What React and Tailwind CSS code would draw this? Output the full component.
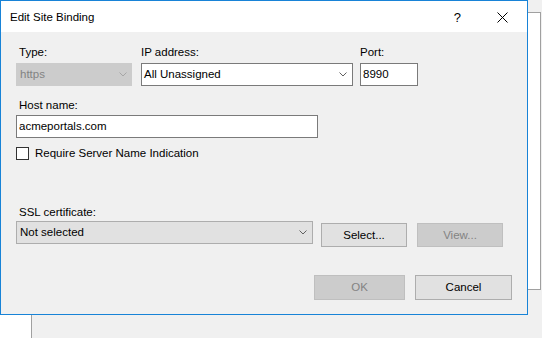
import React from "react";

const font = { fontFamily: '"Liberation Sans", Arial, sans-serif' };

function Chevron({ color = "#606060" }) {
  return (
    <svg width="8" height="5" viewBox="0 0 8 5" className="shrink-0">
      <path d="M0.5 0.5 L4 4 L7.5 0.5" fill="none" stroke={color} strokeWidth="1" />
    </svg>
  );
}

export default function App() {
  return (
    <div
      className="relative w-[542px] h-[338px] overflow-hidden bg-[#f0f0f0] text-[11.5px] leading-[15px] text-black"
      style={font}
    >
      {/* background window pieces */}
      <div className="absolute left-0 top-[290px] w-[32px] h-[48px] bg-white border-r border-[#a0a0a0]" />
      <div className="absolute left-[520px] top-[12px] w-[21px] h-[278px] bg-white border-t border-r border-b border-[#a0a0a0]" />

      {/* dialog */}
      <div className="absolute left-0 top-0 w-[528px] h-[315px] border border-[#1883d7] bg-[#f0f0f0] flex flex-col">
        <div className="h-[31px] bg-white flex items-center pt-[2px]">
          <span className="pl-[9px] flex-1">Edit Site Binding</span>
          <span className="text-[13px] mr-[36px] mb-[1px]">?</span>
          <svg width="11" height="11" viewBox="0 0 11 11" className="mr-[19px] mb-[1px]">
            <path d="M0.5 0.5 L10.5 10.5 M10.5 0.5 L0.5 10.5" stroke="#000" strokeWidth="1" />
          </svg>
        </div>

        <div className="flex-1 flex flex-col pl-[15px] pr-[15px] pt-[13px]">
          {/* row 1 */}
          <div className="flex">
            <div className="w-[116px] flex flex-col">
              <div className="h-[15px] pl-[3px]">Type:</div>
              <div className="mt-[3px] h-[23px] bg-[#cccccc] border border-[#cccccc] flex items-center pl-[3px] pr-[4px] text-[#838383]">
                <span className="flex-1">https</span>
                <Chevron color="#a6a6a6" />
              </div>
            </div>
            <div className="w-[212px] ml-[9px] flex flex-col">
              <div className="h-[15px]">IP address:</div>
              <div className="mt-[3px] h-[23px] bg-white border border-[#7a7a7a] flex items-center pl-[2px] pr-[5px]">
                <span className="flex-1">All Unassigned</span>
                <Chevron />
              </div>
            </div>
            <div className="w-[58px] ml-[7px] flex flex-col">
              <div className="h-[15px]">Port:</div>
              <div className="mt-[3px] h-[23px] bg-white border border-[#7a7a7a] flex items-center pl-[2px]">
                8990
              </div>
            </div>
          </div>

          {/* host name */}
          <div className="mt-[12px] h-[15px] pl-[3px]">Host name:</div>
          <div className="mt-[2px] w-[302px] h-[23px] bg-white border border-[#7a7a7a] flex items-center pl-[2px]">
            acmeportals.com
          </div>

          {/* checkbox */}
          <div className="mt-[9px] h-[13px] flex items-center gap-[6px]">
            <div className="w-[13px] h-[13px] bg-white border border-[#333333]" />
            <span>Require Server Name Indication</span>
          </div>

          {/* SSL */}
          <div className="mt-[45px] h-[15px] pl-[3px]">SSL certificate:</div>
          <div className="mt-[1px] flex items-start">
            <div className="w-[297px] h-[23px] bg-[#e1e1e1] border border-[#adadad] flex items-center pl-[3px] pr-[5px]">
              <span className="flex-1">Not selected</span>
              <Chevron />
            </div>
            <div className="ml-[8px] mt-[2px] w-[86px] h-[24px] bg-[#e1e1e1] border border-[#adadad] flex items-center justify-center">
              Select...
            </div>
            <div className="ml-[10px] mt-[2px] w-[86px] h-[24px] bg-[#cccccc] border border-[#bfbfbf] flex items-center justify-center text-[#838383]">
              View...
            </div>
          </div>

          {/* bottom buttons */}
          <div className="mt-[28px] flex justify-end gap-[10px]">
            <div className="w-[91px] h-[25px] bg-[#cccccc] border border-[#bfbfbf] flex items-center justify-center text-[#838383]">
              OK
            </div>
            <div className="w-[97px] h-[25px] bg-[#e1e1e1] border border-[#adadad] flex items-center justify-center">
              Cancel
            </div>
          </div>
        </div>
      </div>
    </div>
  );
}
